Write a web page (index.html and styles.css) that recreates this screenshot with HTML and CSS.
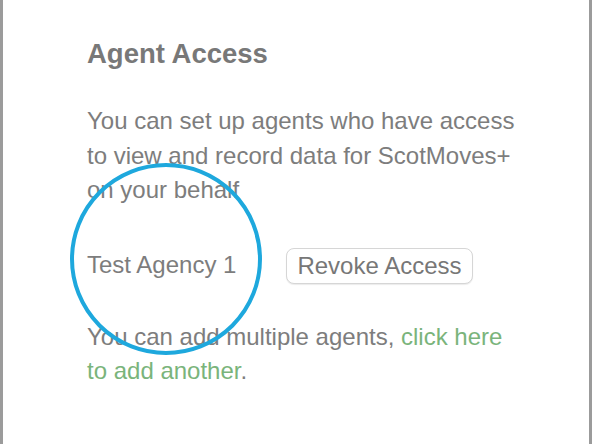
FILE: index.html
```html
<!DOCTYPE html>
<html lang="en">
<head>
    <meta charset="UTF-8">
    <meta name="viewport" content="width=device-width, initial-scale=1.0">
    <title>Agent Access</title>
    <link rel="stylesheet" href="styles.css">
</head>
<body>
    <div class="panel">
        <h2 class="titulo">Agent Access</h2>

        <p class="texto">You can set up agents who have access to view and record data for ScotMoves+ on your behalf</p>

        <div class="agente">
            <span class="nombre">Test Agency 1</span>
            <button class="revocar">Revoke Access</button>
        </div>

        <p class="texto">You can add multiple agents, <a href="#" class="enlace">click here to add another</a>.</p>

        <!-- circulo de la anotacion -->
        <div class="marca"></div>
    </div>
</body>
</html>
```

FILE: styles.css
```css
body {
    font-family: "Liberation Sans", Arial, sans-serif;
    margin: 0;
    padding: 0;
    background-color: #fff;
    color: #7d7d7d;
}

.panel {
    position: relative;
    height: 444px;
    box-sizing: border-box;
    border-left: 3px solid #9b9b9b;
    border-right: 3px solid #9b9b9b;
    padding: 38px 68px 0 84px;
}

.titulo {
    margin: 0 0 34px;
    font-size: 27.5px;
    line-height: 32px;
    font-weight: bold;
    color: #787878;
}

.texto {
    margin: 0;
    font-size: 24px;
    line-height: 34.5px;
}

.agente {
    display: flex;
    align-items: center;
    gap: 50px;
    margin: 40px 0 36px;
}

.nombre {
    font-size: 24px;
    line-height: 34.5px;
}

.revocar {
    font-family: inherit;
    font-size: 24px;
    line-height: 34px;
    padding: 0 10px;
    color: #777;
    background-color: #fff;
    border: 1px solid #d6d6d6;
    border-radius: 8px;
    box-shadow: 0 1px 1px rgba(0, 0, 0, 0.08);
}

.enlace {
    color: #7ab47b;
    text-decoration: none;
}

.marca {
    position: absolute;
    left: 67px;
    top: 163px;
    width: 192px;
    height: 192px;
    box-sizing: border-box;
    border: 4px solid #1ea8dd;
    border-radius: 50%;
}
```
